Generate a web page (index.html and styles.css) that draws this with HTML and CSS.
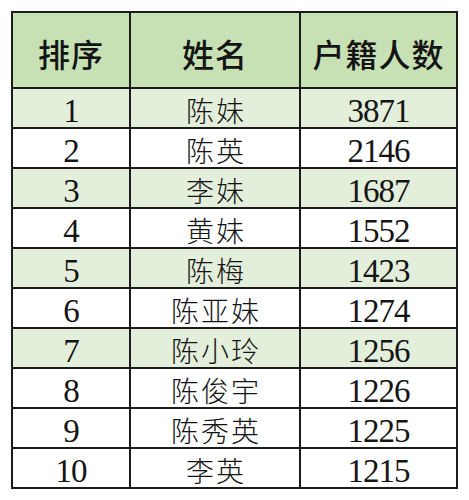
FILE: index.html
```html
<!DOCTYPE html>
<html>
<head>
<meta charset="utf-8">
<link rel="stylesheet" href="styles.css">
</head>
<body>
<div class="table">
  <div class="cell head">排序</div><div class="cell head">姓名</div><div class="cell head">户籍人数</div>
  <div class="cell num alt">1</div><div class="cell name alt">陈妹</div><div class="cell num alt">3871</div>
  <div class="cell num">2</div><div class="cell name">陈英</div><div class="cell num">2146</div>
  <div class="cell num alt">3</div><div class="cell name alt">李妹</div><div class="cell num alt">1687</div>
  <div class="cell num">4</div><div class="cell name">黄妹</div><div class="cell num">1552</div>
  <div class="cell num alt">5</div><div class="cell name alt">陈梅</div><div class="cell num alt">1423</div>
  <div class="cell num">6</div><div class="cell name">陈亚妹</div><div class="cell num">1274</div>
  <div class="cell num alt">7</div><div class="cell name alt">陈小玲</div><div class="cell num alt">1256</div>
  <div class="cell num">8</div><div class="cell name">陈俊宇</div><div class="cell num">1226</div>
  <div class="cell num">9</div><div class="cell name">陈秀英</div><div class="cell num">1225</div>
  <div class="cell num">10</div><div class="cell name">李英</div><div class="cell num">1215</div>
</div>
</body>
</html>
```

FILE: styles.css
```css
html, body {
  margin: 0;
  background: #ffffff;
}
body {
  padding: 11px 0 0 11px;
  color: #141414;
}
.table {
  display: grid;
  grid-template-columns: 118px 170px 157px;
  grid-template-rows: 76px repeat(10, 40px);
  width: 445px;
  border-left: 2px solid #1c1c1c;
  border-top: 2px solid #1c1c1c;
}
.cell {
  display: flex;
  align-items: center;
  justify-content: center;
  border-right: 2px solid #1c1c1c;
  border-bottom: 2px solid #1c1c1c;
  background: #ffffff;
  box-sizing: border-box;
}
.head {
  background: #c7e0b4;
  font-family: "Noto Sans CJK SC", sans-serif;
  font-weight: 500;
  font-size: 32px;
  letter-spacing: 1px;
  padding-top: 5px;
}
.alt {
  background: #e3efda;
}
.cell.num {
  font-family: "Liberation Serif", serif;
  font-size: 33px;
  letter-spacing: -1px;
  padding-top: 7px;
}
.name {
  font-family: "Noto Sans CJK SC", sans-serif;
  font-weight: 300;
  font-size: 28px;
  letter-spacing: 2px;
  padding-top: 4px;
  padding-left: 2px;
}
```
